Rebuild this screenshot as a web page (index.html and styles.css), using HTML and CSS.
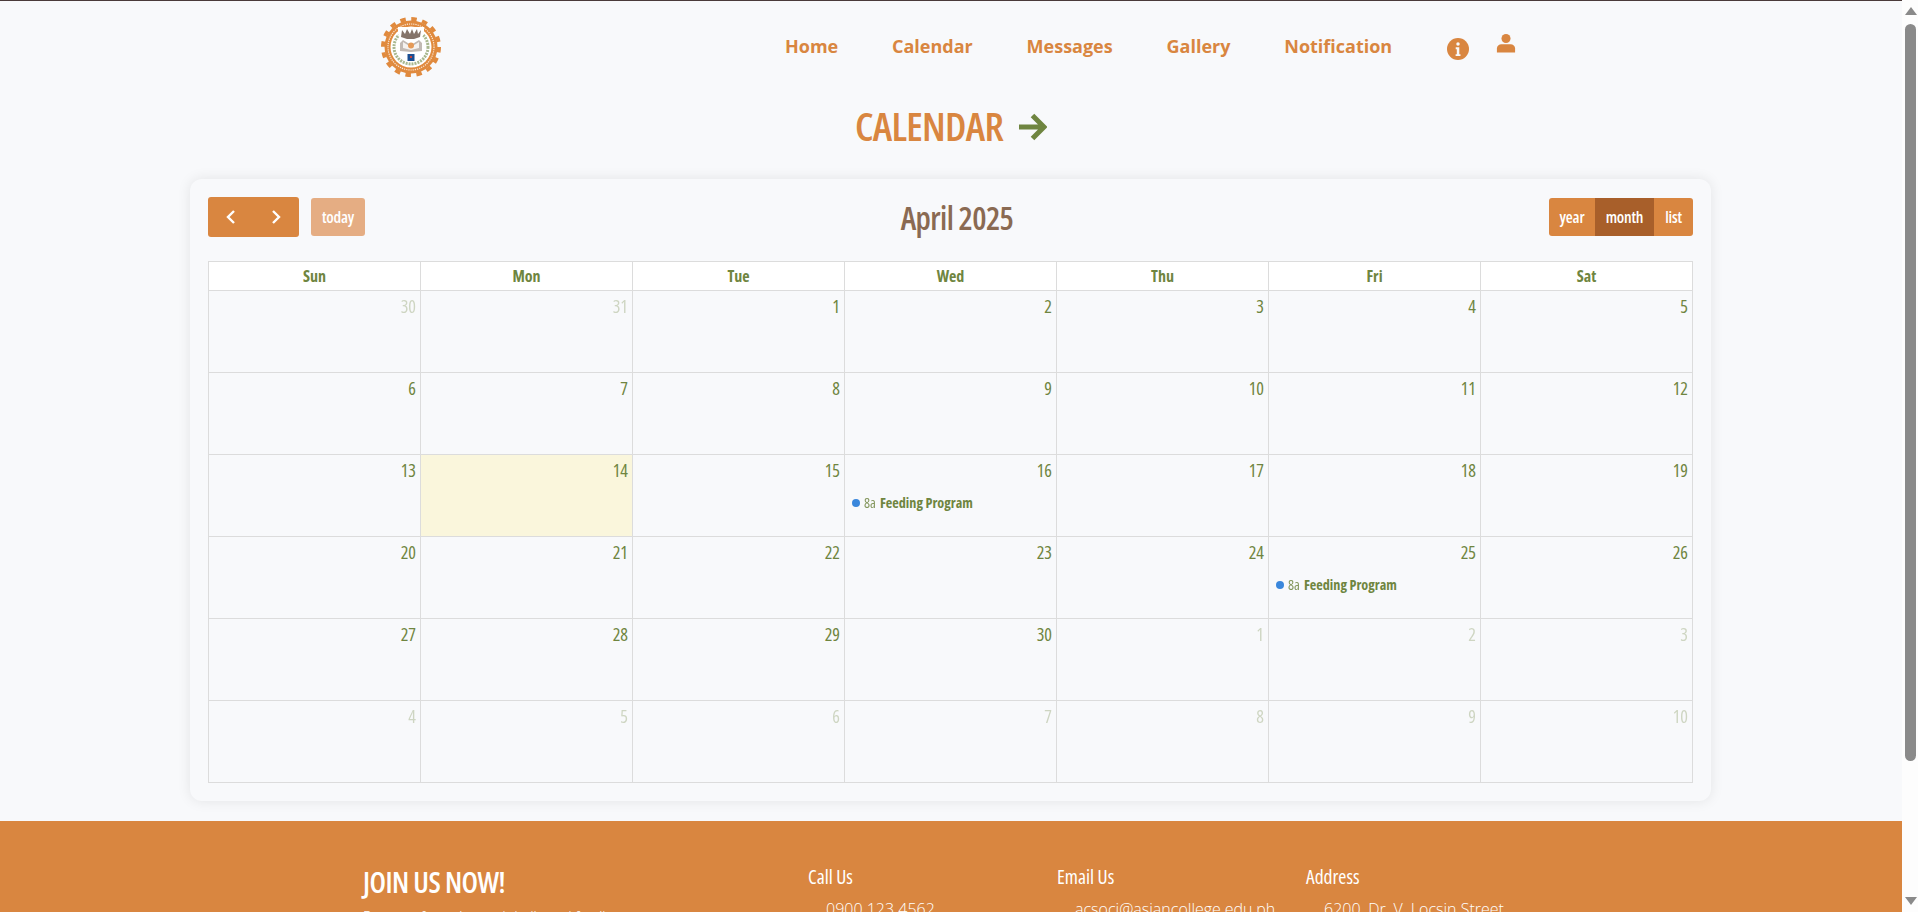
FILE: index.html
```html
<!DOCTYPE html>
<html lang="en">
<head>
<meta charset="utf-8">
<title>Calendar</title>
<link rel="stylesheet" href="styles.css">
</head>
<body>
<header class="topbar">
  <svg class="logo" viewBox="0 0 60 60" aria-hidden="true">
    <circle cx="30" cy="30" r="28" fill="none" stroke="#e08a3e" stroke-width="4" stroke-dasharray="5.500 5.500"/>
    <circle cx="30" cy="30" r="26.500" fill="#e08a3e"/>
    <circle cx="30" cy="30" r="23" fill="none" stroke="#fbe9d8" stroke-width="1.200" stroke-dasharray="1.200 1"/>
    <circle cx="30" cy="30" r="20.500" fill="#fff"/>
    <circle cx="30" cy="30" r="17" fill="none" stroke="#a9b88f" stroke-width="3" stroke-dasharray="2 1"/>
    <path d="M17 10h26v7l-5 8-16 0-5-8z" fill="#fff"/>
    <path d="M21 13l3 4 2-5 3 5 2-5 2 5 3-5 1 5 3-4-1 7-6 2h-7l-6-2z" fill="#85746a"/>
    <path d="M19 26l3-3 8 5 8-5 3 3v8l-11 1-11-1z" fill="#c2bab4"/>
    <path d="M22 25l8 5 8-5v6l-8 2-8-2z" fill="#f5f2ef"/>
    <circle cx="30" cy="28.500" r="3" fill="#e59a57"/>
    <rect x="26.500" y="37" width="7" height="7" fill="#1c4f92"/>
    <rect x="29" y="39" width="2" height="2" fill="#c8413a"/>
  </svg>
  <nav class="nav">
    <a href="#">Home</a>
    <a href="#">Calendar</a>
    <a href="#">Messages</a>
    <a href="#">Gallery</a>
    <a href="#">Notification</a>
  </nav>
  <svg class="icon-info" viewBox="0 0 24 24" aria-hidden="true">
    <circle cx="12" cy="12" r="12" fill="#d98640"/>
    <circle cx="12" cy="6.500" r="1.900" fill="#f8f9fb"/>
    <path d="M9.500 10.200h3.900v7.400h1.300v2h-5.300v-2h1.300v-5.400h-1.200z" fill="#f8f9fb"/>
  </svg>
  <svg class="icon-user" viewBox="0 0 22 22" aria-hidden="true">
    <circle cx="11" cy="5.500" r="5" fill="#d98640"/>
    <path d="M1 21v-4.500c0-3 2.200-4.800 5-4.800h10c2.800 0 5 1.800 5 4.800V21z" fill="#d98640"/>
  </svg>
</header>

<h1 class="page-title">CALENDAR
  <svg class="title-arrow" viewBox="0 0 28 28" aria-hidden="true">
    <path d="M0 14h24M13.500 2.500L25 14 13.500 25.500" fill="none" stroke="#6f8540" stroke-width="5"/>
  </svg>
</h1>

<main class="card">
  <div class="toolbar">
    <div class="toolbar-left">
      <div class="pager">
        <button class="pager-btn" type="button" aria-label="prev">
          <svg viewBox="0 0 9 14"><path d="M8 1L2 7l6 6" fill="none" stroke="#fff" stroke-width="2.400"/></svg>
        </button>
        <button class="pager-btn" type="button" aria-label="next">
          <svg viewBox="0 0 9 14"><path d="M1 1l6 6-6 6" fill="none" stroke="#fff" stroke-width="2.400"/></svg>
        </button>
      </div>
      <button class="today" type="button">today</button>
    </div>
    <h2 class="month-title">April 2025</h2>
    <div class="views">
      <button class="view view-year" type="button">year</button>
      <button class="view view-month" type="button">month</button>
      <button class="view view-list" type="button">list</button>
    </div>
  </div>
  <table class="cal">
    <thead>
      <tr><th>Sun</th><th>Mon</th><th>Tue</th><th>Wed</th><th>Thu</th><th>Fri</th><th>Sat</th></tr>
    </thead>
    <tbody>
      <tr>
        <td class="other"><span class="num">30</span></td><td class="other"><span class="num">31</span></td><td><span class="num">1</span></td><td><span class="num">2</span></td><td><span class="num">3</span></td><td><span class="num">4</span></td><td><span class="num">5</span></td>
      </tr>
      <tr>
        <td><span class="num">6</span></td><td><span class="num">7</span></td><td><span class="num">8</span></td><td><span class="num">9</span></td><td><span class="num">10</span></td><td><span class="num">11</span></td><td><span class="num">12</span></td>
      </tr>
      <tr>
        <td><span class="num">13</span></td><td class="now"><span class="num">14</span></td><td><span class="num">15</span></td>
        <td><span class="num">16</span><div class="event"><i class="dot"></i><span class="time">8a</span><b class="ev-title">Feeding Program</b></div></td>
        <td><span class="num">17</span></td><td><span class="num">18</span></td><td><span class="num">19</span></td>
      </tr>
      <tr>
        <td><span class="num">20</span></td><td><span class="num">21</span></td><td><span class="num">22</span></td><td><span class="num">23</span></td><td><span class="num">24</span></td>
        <td><span class="num">25</span><div class="event"><i class="dot"></i><span class="time">8a</span><b class="ev-title">Feeding Program</b></div></td>
        <td><span class="num">26</span></td>
      </tr>
      <tr>
        <td><span class="num">27</span></td><td><span class="num">28</span></td><td><span class="num">29</span></td><td><span class="num">30</span></td><td class="other"><span class="num">1</span></td><td class="other"><span class="num">2</span></td><td class="other"><span class="num">3</span></td>
      </tr>
      <tr>
        <td class="other"><span class="num">4</span></td><td class="other"><span class="num">5</span></td><td class="other"><span class="num">6</span></td><td class="other"><span class="num">7</span></td><td class="other"><span class="num">8</span></td><td class="other"><span class="num">9</span></td><td class="other"><span class="num">10</span></td>
      </tr>
    </tbody>
  </table>
</main>

<footer class="footer">
  <div class="join">
    <h3>JOIN US NOW!</h3>
    <p>Be part of a caring and dedicated family</p>
  </div>
  <div class="contact">
    <h4>Call Us</h4>
    <p>0900 123 4562</p>
  </div>
  <div class="contact">
    <h4>Email Us</h4>
    <p>acsoci@asiancollege.edu.ph</p>
  </div>
  <div class="contact">
    <h4>Address</h4>
    <p>6200, Dr. V. Locsin Street</p>
    <p>Dumaguete City</p>
  </div>
</footer>

<div class="scrollbar" aria-hidden="true">
  <span class="arrow-up"></span>
  <span class="thumb"></span>
  <span class="arrow-down"></span>
</div>
</body>
</html>
```
FILE: styles.css
```css
* { box-sizing: border-box; }
html { background: #f8f9fb; }
body {
  margin: 0 16px 0 0;
  border-top: 1px solid #4a3a3a;
  font-family: "Open Sans", "Liberation Sans", sans-serif;
}
.topbar {
  height: 91px;
  display: flex;
  align-items: flex-start;
  padding: 16px 0 0 381px;
}
.logo { width: 60px; height: 60px; filter: blur(0.35px); }
.nav {
  display: flex;
  gap: 53.800px;
  margin-left: 344px;
  margin-top: 17px;
}
.nav a {
  color: #d98640;
  font-size: 18px;
  font-weight: 700;
  text-decoration: none;
  line-height: 24px;
}
.icon-info { width: 22px; height: 22px; margin: 21px 0 0 55px; }
.icon-user { width: 20px; height: 21px; margin: 16px 0 0 27px; }
.page-title {
  margin: 0;
  height: 87px;
  display: flex;
  justify-content: center;
  align-items: flex-start;
  gap: 16px;
  color: #d98640;
  font-family: "Open Sans", "Liberation Sans", sans-serif;
  font-stretch: 75%;
  font-size: 40px;
  font-weight: 600;
  letter-spacing: -0.7px;
  line-height: 44px;
  padding-top: 12px;
}
.title-arrow { width: 28px; height: 28px; margin-top: 9px; }
.card {
  margin: 0 0 20px 190px;
  width: 1521px;
  height: 622px;
  padding: 18px;
  border-radius: 12px;
  background: #f8f9fb;
  box-shadow: 0 0 14px rgba(0, 0, 0, 0.09);
}
.toolbar {
  display: flex;
  justify-content: space-between;
  align-items: center;
  height: 40px;
  margin-bottom: 24px;
}
.toolbar-left { display: flex; align-items: center; gap: 12px; width: 157px; }
.pager { display: flex; border-radius: 3px; overflow: hidden; background: #d98640; }
.pager-btn {
  width: 45.500px;
  height: 40px;
  padding: 0;
  border: 0;
  background: transparent;
  display: flex;
  align-items: center;
  justify-content: center;
}
.pager-btn svg { width: 9px; height: 14px; }
.today, .view {
  height: 38px;
  border: 0;
  color: #fff;
  font-family: "Open Sans", "Liberation Sans", sans-serif;
  font-stretch: 75%;
  font-size: 16px;
  font-weight: 600;
  letter-spacing: -0.2px;
  padding: 0;
}
.today { width: 54px; background: #e5ad83; border-radius: 3px; }
.month-title {
  margin: 0;
  color: #8a6a52;
  font-family: "Open Sans", "Liberation Sans", sans-serif;
  font-stretch: 75%;
  font-size: 32px;
  font-weight: 600;
  letter-spacing: -0.6px;
}
.views { display: flex; border-radius: 3px; overflow: hidden; }
.view { background: #d98640; }
.view-year { width: 46px; }
.view-month { background: #a85f2a; width: 59px; }
.view-list { width: 39px; }
.cal {
  width: 1485px;
  border-collapse: collapse;
  table-layout: fixed;
  font-family: "Open Sans", "Liberation Sans", sans-serif;
  font-stretch: 75%;
  color: #6f8540;
}
.cal th, .cal td { border: 1px solid #dcdcdc; }
.cal th {
  height: 29px;
  background: #fff;
  font-size: 16px;
  font-weight: 700;
}
.cal td {
  height: 82px;
  vertical-align: top;
  padding: 4px;
  font-size: 18px;
}
.num { display: block; text-align: right; line-height: 22px; }
.other .num { opacity: 0.3; }
.now { background: #faf6dc; }
.event {
  display: flex;
  align-items: center;
  gap: 4px;
  margin-top: 13px;
  padding-left: 3px;
  font-size: 14.200px;
  line-height: 18px;
  white-space: pre;
}
.dot { width: 8px; height: 8px; border-radius: 50%; background: #3a87dc; }
.time { font-weight: 400; opacity: 0.85; }
.ev-title { font-weight: 700; }
.footer {
  background: #d98640;
  height: 200px;
  color: #fff;
  display: flex;
  padding: 44px 0 0 363px;
}
.join { width: 445px; }
.join h3 {
  margin: 0;
  font-family: "Open Sans", "Liberation Sans", sans-serif;
  font-stretch: 75%;
  font-size: 29px;
  font-weight: 600;
  letter-spacing: -0.55px;
  line-height: 34px;
}
.join p { margin: 8px 0 0; font-size: 14px; font-weight: 300; }
.contact { width: 249px; }
.contact h4 {
  margin: 0;
  font-family: "Open Sans", "Liberation Sans", sans-serif;
  font-stretch: 75%;
  font-size: 19.500px;
  font-weight: 400;
  line-height: 24px;
}
.contact p { margin: 9px 0 0 18px; font-size: 16px; font-weight: 300; line-height: 22px; }
.scrollbar {
  position: fixed;
  top: 0;
  right: 0;
  bottom: 0;
  width: 16px;
  padding-left: 1px;
  background: #fdfdfd;
  display: flex;
  flex-direction: column;
  align-items: center;
}
.arrow-up, .arrow-down { width: 0; height: 0; border-left: 6px solid transparent; border-right: 6px solid transparent; }
.arrow-up { border-bottom: 8px solid #8a8a8a; margin-top: 7px; }
.arrow-down { border-top: 8px solid #8a8a8a; margin-bottom: 7px; }
.thumb { width: 11px; flex: 1; margin: 9px 0 136px; background: #8a8a8a; border-radius: 6px; }
```
